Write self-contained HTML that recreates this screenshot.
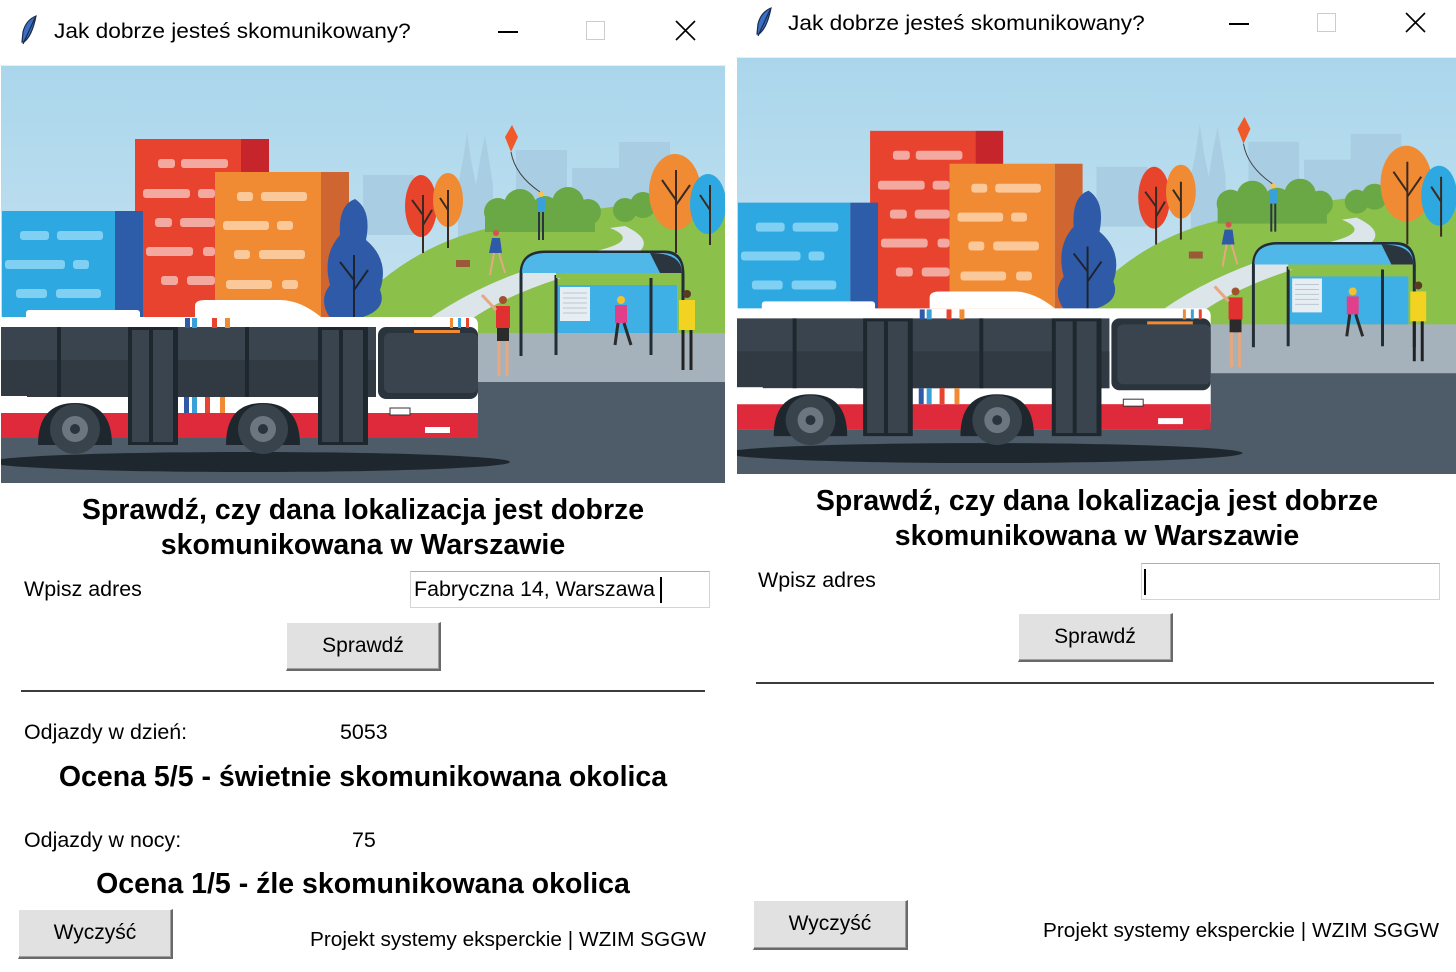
<!DOCTYPE html>
<html><head><meta charset="utf-8"><style>
body{margin:0;width:1456px;height:972px;background:#fff;position:relative;overflow:hidden;font-family:"Liberation Sans",sans-serif;color:#000}
.a{position:absolute;white-space:nowrap}
.t{font-size:20px;line-height:24px;transform-origin:0 50%;transform:scaleX(1.04)}
.ti{font-size:21px;line-height:24px;transform-origin:0 50%;transform:scaleX(1.08)}
.h{font-size:28.5px;font-weight:bold;line-height:35px;text-align:center;width:724px}
.lbl{font-size:21px;line-height:26px;transform-origin:0 50%;transform:scaleX(1.02)}
.btn{position:absolute;background:#e1e1e1;border-top:1px solid #fff;border-left:1px solid #fff;border-right:2px solid #696969;border-bottom:2px solid #696969;box-shadow:inset -1px -1px 0 #a0a0a0;font-size:21px;text-align:center;box-sizing:border-box}
.btn span{display:inline-block;transform:scaleX(1.0)}
.ent{position:absolute;border:1px solid #d4d4d4;border-top-color:#b0b0b0;background:#fff;box-sizing:border-box}
</style></head><body>
<svg width="0" height="0" style="position:absolute">
<defs>
<linearGradient id="sky" x1="0" y1="0" x2="0" y2="1"><stop offset="0" stop-color="#aad6ec"/><stop offset="1" stop-color="#d6e9f2"/></linearGradient>
<symbol id="ill" viewBox="1 66 724 417">
<rect x="1" y="66" width="724" height="417" fill="url(#sky)"/>
<g fill="#a9cde3">
<rect x="363" y="175" width="51" height="60"/>
<rect x="516" y="150" width="51" height="90"/>
<rect x="572" y="168" width="47" height="70"/>
<rect x="619" y="142" width="51" height="95"/>
<path d="M458 240 L458 185 L463 160 L467 132 L471 160 L476 185 L480 160 L485 135 L489 160 L493 185 L493 240Z"/>
</g>
<path d="M360 300 Q420 240 500 226 Q600 205 725 195 L725 340 L360 340Z" fill="#8bc04b"/>
<path d="M430 318 Q500 270 600 250 Q640 240 610 228 L625 226 Q665 245 620 262 Q520 285 470 320Z" fill="#dbe5ea"/>
<g fill="#6aa845">
<circle cx="498" cy="212" r="14"/><circle cx="520" cy="205" r="16"/><circle cx="545" cy="210" r="14"/><circle cx="568" cy="203" r="16"/><circle cx="588" cy="212" r="13"/>
<rect x="485" y="210" width="110" height="22"/>
<circle cx="625" cy="210" r="12"/><circle cx="643" cy="205" r="13"/>
</g>
<ellipse cx="421" cy="206" rx="16" ry="31" fill="#e8442c"/>
<ellipse cx="448" cy="200" rx="15" ry="27" fill="#f08a33"/>
<ellipse cx="675" cy="192" rx="26" ry="38" fill="#f08a33"/>
<ellipse cx="708" cy="204" rx="18" ry="30" fill="#2ea8e0"/>
<g stroke="#3a2a22" stroke-width="2" fill="none">
<path d="M423 253 V195 M423 215 L412 200 M423 225 L432 210"/>
<path d="M448 248 V190 M448 210 L440 198"/>
<path d="M676 253 V170 M676 200 L662 180 M676 205 L690 185"/>
<path d="M710 245 V185 M710 210 L700 195"/>
</g>
<rect x="135" y="139" width="106" height="180" fill="#e8432e"/>
<rect x="241" y="139" width="28" height="180" fill="#c6262b"/>
<rect x="2" y="211" width="113" height="108" fill="#2ea8e0"/>
<rect x="115" y="211" width="28" height="108" fill="#2d5da8"/>
<rect x="215" y="172" width="106" height="147" fill="#f08a33"/>
<rect x="321" y="172" width="28" height="147" fill="#cf6530"/>
<g fill="#f4a9a0">
<rect x="158" y="159" width="17" height="9" rx="3"/><rect x="181" y="159" width="47" height="9" rx="3"/>
<rect x="143" y="189" width="47" height="9" rx="3"/><rect x="198" y="189" width="17" height="9" rx="3"/>
<rect x="155" y="218" width="17" height="9" rx="3"/><rect x="180" y="218" width="35" height="9" rx="3"/>
<rect x="146" y="247" width="47" height="9" rx="3"/><rect x="203" y="247" width="12" height="9" rx="3"/>
<rect x="161" y="276" width="17" height="9" rx="3"/><rect x="187" y="276" width="28" height="9" rx="3"/>
</g>
<g fill="#fbc89a">
<rect x="237" y="192" width="16" height="9" rx="3"/><rect x="261" y="192" width="46" height="9" rx="3"/>
<rect x="223" y="221" width="46" height="9" rx="3"/><rect x="277" y="221" width="16" height="9" rx="3"/>
<rect x="234" y="250" width="16" height="9" rx="3"/><rect x="259" y="250" width="46" height="9" rx="3"/>
<rect x="226" y="280" width="46" height="9" rx="3"/><rect x="282" y="280" width="16" height="9" rx="3"/>
</g>
<g fill="#7fd0f2">
<rect x="20" y="231" width="29" height="9" rx="3"/><rect x="57" y="231" width="46" height="9" rx="3"/>
<rect x="5" y="260" width="60" height="9" rx="3"/><rect x="73" y="260" width="16" height="9" rx="3"/>
<rect x="16" y="289" width="31" height="9" rx="3"/><rect x="56" y="289" width="45" height="9" rx="3"/>
</g>
<path d="M355 199 Q372 210 366 240 Q390 260 380 290 Q388 310 360 318 L330 318 Q318 300 330 285 Q322 255 340 235 Q338 205 355 199Z" fill="#2f5aa8"/>
<path d="M354 318 V255 M354 280 L340 262 M354 290 L368 270" stroke="#1d2630" stroke-width="2" fill="none"/>
<rect x="360" y="333" width="365" height="50" fill="#a6b2bb"/>
<rect x="360" y="382" width="365" height="101" fill="#4e5b68"/>
<rect x="1" y="430" width="480" height="53" fill="#4e5b68"/>
<ellipse cx="250" cy="462" rx="260" ry="10" fill="#1f272e"/>
<path d="M521 356 V275 Q521 252 545 252 H665 Q683 252 683 275 V356" fill="none" stroke="#222d36" stroke-width="3"/>
<path d="M522 273 Q522 253 546 253 H662 Q682 253 682 273Z" fill="#4fb8e8"/>
<path d="M650 253 Q682 253 682 273 H660Z" fill="#2b3540"/>
<rect x="556" y="285" width="121" height="48" fill="#3fb0e6"/>
<rect x="560" y="287" width="30" height="34" fill="#e6eef3"/>
<g stroke="#b8c7d0" stroke-width="1"><path d="M563 293 H587 M563 298 H587 M563 303 H587 M563 308 H587 M563 313 H587"/></g>
<path d="M556 275 V355 M651 275 V355" stroke="#222d36" stroke-width="3"/>
<rect x="556" y="273" width="121" height="5" fill="#8bc04b"/>
<g>
<circle cx="503" cy="300" r="4" fill="#a0522d"/><rect x="496" y="306" width="14" height="22" fill="#e03030"/><rect x="497" y="328" width="12" height="13" fill="#2b2b2b"/><path d="M499 341 V376 M507 341 V376" stroke="#e5a880" stroke-width="3"/><path d="M496 310 L482 295" stroke="#e5a880" stroke-width="3"/>
<circle cx="687" cy="294" r="4" fill="#5a3a22"/><rect x="679" y="300" width="16" height="30" fill="#f3d321"/><path d="M683 330 V370 M691 330 V370" stroke="#222" stroke-width="3"/>
<circle cx="621" cy="300" r="4" fill="#f3c231"/><rect x="615" y="305" width="12" height="18" fill="#e23f8a"/><path d="M618 323 L615 345 M624 323 L631 345" stroke="#2b2b2b" stroke-width="3"/>
<circle cx="541" cy="194" r="3" fill="#f5c25c"/><rect x="537" y="198" width="8" height="14" fill="#3aa0d8"/><path d="M539 212 V240 M543 212 V240" stroke="#2b3540" stroke-width="2"/>
<circle cx="496" cy="233" r="3" fill="#d85050"/><path d="M492 238 L500 238 L502 253 L489 253Z" fill="#2f5aa8"/><path d="M494 253 L490 275 M499 253 L505 273" stroke="#e5a880" stroke-width="2"/>
<rect x="456" y="260" width="14" height="7" fill="#9a5a3a"/>
<path d="M505 137 L512 125 L518 137 L511 152Z" fill="#f05a2a"/><path d="M511 152 Q515 175 540 192" stroke="#444" fill="none"/>
</g>
<rect x="26" y="310" width="114" height="10" rx="3" fill="#fff"/>
<path d="M195 317 V306 Q195 300 205 300 H280 Q300 300 321 317Z" fill="#fff"/>
<path d="M1 317 H470 Q478 317 478 325 V430 Q478 438 470 438 H1Z" fill="#fff"/>
<rect x="1" y="327" width="375" height="70" fill="#3a444e"/>
<rect x="1" y="360" width="375" height="37" fill="#313a43"/>
<rect x="378" y="327" width="100" height="72" rx="8" fill="#2a343d"/>
<rect x="384" y="333" width="94" height="60" rx="6" fill="#3a444e"/>
<rect x="414" y="330" width="46" height="3" fill="#f08a33"/>
<rect x="1" y="413" width="477" height="25" fill="#de2a3b"/>
<path d="M1 397 H120 L140 413 H1Z" fill="#fff"/>
<g fill="#1f272e"><rect x="57" y="327" width="4" height="70"/><rect x="128" y="327" width="50" height="118"/><rect x="245" y="327" width="4" height="70"/><rect x="318" y="327" width="50" height="118"/></g>
<g fill="#3a444e"><rect x="132" y="330" width="17" height="112"/><rect x="153" y="330" width="20" height="112"/><rect x="322" y="330" width="17" height="112"/><rect x="343" y="330" width="20" height="112"/></g>
<g><rect x="185" y="318" width="5" height="10" fill="#2f5aa8"/><rect x="192" y="318" width="5" height="10" fill="#3aa0d8"/><rect x="212" y="318" width="5" height="10" fill="#e8432e"/><rect x="225" y="318" width="5" height="10" fill="#f08a33"/>
<rect x="184" y="397" width="5" height="16" fill="#2f5aa8"/><rect x="192" y="397" width="5" height="16" fill="#3aa0d8"/><rect x="205" y="397" width="5" height="16" fill="#e8432e"/><rect x="220" y="397" width="5" height="16" fill="#f08a33"/>
<rect x="450" y="318" width="3" height="10" fill="#f08a33"/><rect x="458" y="318" width="3" height="10" fill="#3aa0d8"/><rect x="466" y="318" width="3" height="10" fill="#e8432e"/></g>
<rect x="390" y="408" width="20" height="7" fill="#fff" stroke="#333"/><rect x="425" y="427" width="25" height="6" fill="#fff"/>
<g fill="#fff"><rect x="1" y="396" width="26" height="2"/><rect x="1" y="401" width="26" height="2"/><rect x="1" y="406" width="26" height="2"/></g>
<path d="M38 445 Q38 403 75 403 Q112 403 112 445Z" fill="#1f272e"/>
<path d="M226 445 Q226 403 263 403 Q300 403 300 445Z" fill="#1f272e"/>
<circle cx="75" cy="429" r="25" fill="#39434c"/><circle cx="75" cy="429" r="13" fill="#6b7680"/><circle cx="75" cy="429" r="5" fill="#2b343c"/>
<circle cx="263" cy="429" r="25" fill="#39434c"/><circle cx="263" cy="429" r="13" fill="#6b7680"/><circle cx="263" cy="429" r="5" fill="#2b343c"/>
</symbol>
</defs></svg>

<!-- LEFT WINDOW -->
<svg class="a" style="left:18px;top:14px" width="22" height="32" viewBox="0 0 22 32"><path d="M18 2 Q8 6 5 18 L4 28 L6 28 Q14 22 18 2Z" fill="#3a6fc4" stroke="#1a2a4a" stroke-width="1.2"/><path d="M17 4 L5 30" stroke="#1a2a4a" stroke-width="1.2"/></svg>
<div class="a ti" style="left:54px;top:20px">Jak dobrze jesteś skomunikowany?</div>
<div class="a" style="left:498px;top:31px;width:20px;height:2px;background:#000"></div>
<div class="a" style="left:586px;top:21px;width:17px;height:17px;border:1px solid #ccc"></div>
<svg class="a" style="left:675px;top:20px" width="21" height="21"><path d="M1 1L20 20M20 1L1 20" stroke="#000" stroke-width="1.6"/></svg>
<div class="a" style="left:0;top:65px;width:726px;height:1px;background:#e4eef5"></div>
<svg class="a" style="left:1px;top:66px" width="724" height="417"><use href="#ill"/></svg>

<div class="a h" style="left:1px;top:493px">Sprawdź, czy dana lokalizacja jest dobrze<br>skomunikowana w Warszawie</div>
<div class="a lbl" style="left:24px;top:577px">Wpisz adres</div>
<div class="ent" style="left:410px;top:571px;width:300px;height:37px"><span class="a lbl" style="left:3px;top:5px">Fabryczna 14, Warszawa</span><span class="a" style="left:249px;top:5px;width:2px;height:26px;background:#000"></span></div>
<div class="btn" style="left:286px;top:622px;width:155px;height:49px;line-height:45px"><span>Sprawdź</span></div>
<div class="a" style="left:21px;top:690px;width:684px;height:2px;background:#3c3c3c"></div>
<div class="a lbl" style="left:24px;top:720px">Odjazdy w dzień:</div>
<div class="a lbl" style="left:340px;top:720px">5053</div>
<div class="a h" style="left:1px;top:760px">Ocena 5/5 - świetnie skomunikowana okolica</div>
<div class="a lbl" style="left:24px;top:828px">Odjazdy w nocy:</div>
<div class="a lbl" style="left:352px;top:828px">75</div>
<div class="a h" style="left:1px;top:867px">Ocena 1/5 - źle skomunikowana okolica</div>
<div class="btn" style="left:18px;top:909px;width:155px;height:50px;line-height:46px"><span>Wyczyść</span></div>
<div class="a t" style="left:310px;top:928px">Projekt systemy eksperckie | WZIM SGGW</div>

<!-- RIGHT WINDOW -->
<svg class="a" style="left:753px;top:6px" width="22" height="32" viewBox="0 0 22 32"><path d="M18 2 Q8 6 5 18 L4 28 L6 28 Q14 22 18 2Z" fill="#3a6fc4" stroke="#1a2a4a" stroke-width="1.2"/><path d="M17 4 L5 30" stroke="#1a2a4a" stroke-width="1.2"/></svg>
<div class="a ti" style="left:788px;top:12px">Jak dobrze jesteś skomunikowany?</div>
<div class="a" style="left:1229px;top:23px;width:20px;height:2px;background:#000"></div>
<div class="a" style="left:1317px;top:13px;width:17px;height:17px;border:1px solid #ccc"></div>
<svg class="a" style="left:1405px;top:12px" width="21" height="21"><path d="M1 1L20 20M20 1L1 20" stroke="#000" stroke-width="1.6"/></svg>
<div class="a" style="left:736px;top:57px;width:720px;height:1px;background:#e4eef5"></div>
<svg class="a" style="left:737px;top:58px" width="719" height="416" viewBox="0 0 724 417" preserveAspectRatio="none"><use href="#ill"/></svg>

<div class="a h" style="left:735px;top:484px">Sprawdź, czy dana lokalizacja jest dobrze<br>skomunikowana w Warszawie</div>
<div class="a lbl" style="left:758px;top:568px">Wpisz adres</div>
<div class="ent" style="left:1141px;top:563px;width:299px;height:37px"><span class="a" style="left:2px;top:5px;width:2px;height:26px;background:#000"></span></div>
<div class="btn" style="left:1018px;top:613px;width:155px;height:49px;line-height:45px"><span>Sprawdź</span></div>
<div class="a" style="left:756px;top:682px;width:678px;height:2px;background:#3c3c3c"></div>
<div class="btn" style="left:753px;top:900px;width:155px;height:50px;line-height:46px"><span>Wyczyść</span></div>
<div class="a t" style="left:1043px;top:919px">Projekt systemy eksperckie | WZIM SGGW</div>
</body></html>
